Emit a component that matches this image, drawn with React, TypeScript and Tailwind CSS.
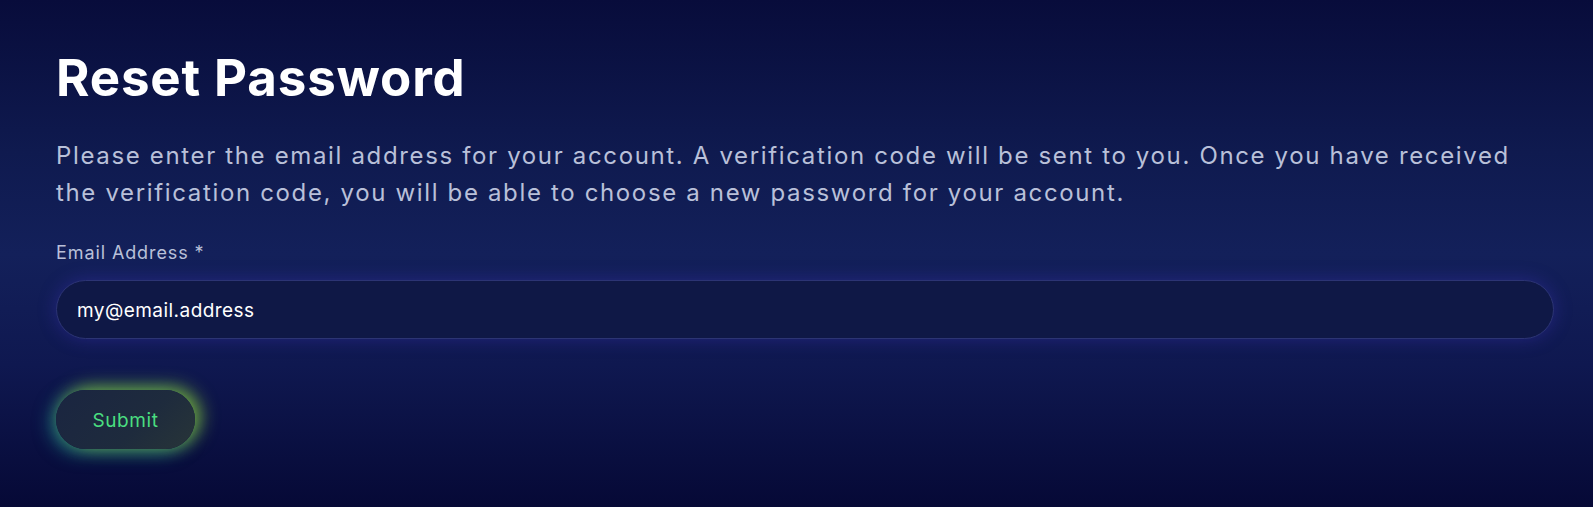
export default function App() {
  return (
    <div
      className="min-h-[507px] w-full pl-14 pr-[39px] pt-[52px] pb-14 bg-[linear-gradient(180deg,#080c3b_0%,#0f1a4f_30%,#13205a_50%,#0f1850_72%,#060936_100%)]"
      style={{ fontFamily: "Inter, 'Noto Sans', sans-serif" }}
    >
      <h1 className="text-[51px] leading-[51px] font-bold text-white tracking-[0.85px]">Reset Password</h1>
      <p className="mt-[34px] text-2xl leading-[37px] tracking-[1.65px] text-[#b9c0d9] whitespace-nowrap">
        Please enter the email address for your account. A verification code will be sent to you. Once you have received
        <br />
        the verification code, you will be able to choose a new password for your account.
      </p>
      <label className="mt-[28px] block text-lg leading-7 tracking-[0.9px] text-[#b9c0d9]">Email Address *</label>
      <div className="mt-[13px] flex h-[59px] items-center rounded-full border border-[#2c3474] bg-[#0f1846] pl-5 pt-[3px] shadow-[0_0_18px_rgba(70,55,200,0.35)]">
        <span className="text-[19px] tracking-[0.45px] text-white">my@email.address</span>
      </div>
      <button className="mt-[51px] flex h-[59px] w-[139px] items-center justify-center rounded-full pt-[3px] bg-[linear-gradient(135deg,#1a2541_0%,#1e2b3d_60%,#283538_100%)] text-[19px] tracking-[0.6px] text-[#4ade80] shadow-[6px_-3px_18px_rgba(150,220,50,0.7),-5px_4px_18px_rgba(40,190,170,0.5)]">
        Submit
      </button>
    </div>
  );
}
